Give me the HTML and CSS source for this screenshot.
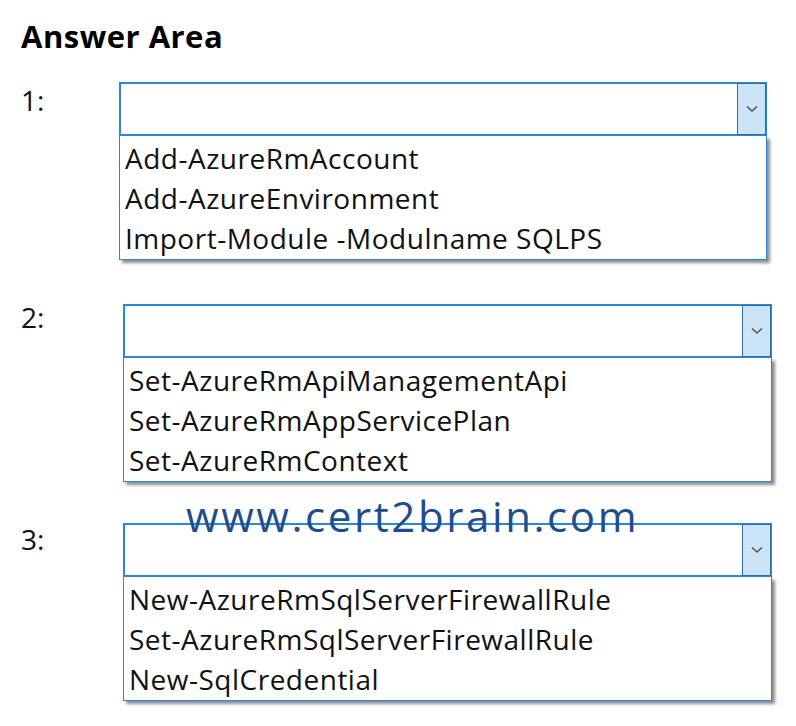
FILE: index.html
```html
<!DOCTYPE html>
<html>
<head>
<meta charset="utf-8">
<link rel="stylesheet" href="styles.css">
</head>
<body>
<div class="page">
  <h1 class="title">Answer Area</h1>

  <div class="group g1">
    <div class="label">1:</div>
    <div class="combo">
      <div class="select">
        <div class="field"></div>
        <div class="btn"><svg width="12" height="8" viewBox="0 0 12 8"><path d="M1 1.5 L6 6 L11 1.5" fill="none" stroke="#555" stroke-width="1.6"/></svg></div>
      </div>
      <div class="list">
        <div class="item">Add-AzureRmAccount</div>
        <div class="item">Add-AzureEnvironment</div>
        <div class="item">Import-Module -Modulname SQLPS</div>
      </div>
    </div>
  </div>

  <div class="group g2">
    <div class="label">2:</div>
    <div class="combo">
      <div class="select">
        <div class="field"></div>
        <div class="btn"><svg width="12" height="8" viewBox="0 0 12 8"><path d="M1 1.5 L6 6 L11 1.5" fill="none" stroke="#555" stroke-width="1.6"/></svg></div>
      </div>
      <div class="list">
        <div class="item">Set-AzureRmApiManagementApi</div>
        <div class="item">Set-AzureRmAppServicePlan</div>
        <div class="item">Set-AzureRmContext</div>
      </div>
    </div>
  </div>

  <div class="group g3">
    <div class="label">3:</div>
    <div class="combo">
      <div class="select">
        <div class="field"></div>
        <div class="btn"><svg width="12" height="8" viewBox="0 0 12 8"><path d="M1 1.5 L6 6 L11 1.5" fill="none" stroke="#555" stroke-width="1.6"/></svg></div>
      </div>
      <div class="list">
        <div class="item">New-AzureRmSqlServerFirewallRule</div>
        <div class="item">Set-AzureRmSqlServerFirewallRule</div>
        <div class="item">New-SqlCredential</div>
      </div>
    </div>
    <div class="watermark">www.cert2brain.com</div>
  </div>
</div>
</body>
</html>
```
FILE: styles.css
```css
html, body {
  margin: 0;
  padding: 0;
  background: #fff;
}
.page {
  position: relative;
  width: 796px;
  height: 726px;
  font-family: "Open Sans", "Noto Sans", sans-serif;
  color: #111;
  padding-top: 16px;
  box-sizing: border-box;
}
.title {
  margin: 0 0 0 21px;
  font-size: 31px;
  font-weight: 700;
  line-height: 40px;
  letter-spacing: 0.5px;
  color: #000;
}
.group {
  position: relative;
  display: flex;
  align-items: flex-start;
}
.g1 { margin-top: 26px; }
.g2 { margin-top: 44px; }
.g3 { margin-top: 41px; }
.label {
  font-size: 28px;
  line-height: 36px;
  padding-left: 21px;
}
.g1 .label { width: 98px; }
.g2 .label { width: 102px; margin-top: -5px; }
.g3 .label { width: 102px; margin-top: -2px; }
.g1 .combo { width: 648px; }
.g2 .combo, .g3 .combo { width: 649px; }
.select {
  display: flex;
  height: 54px;
  box-sizing: border-box;
  border: 2px solid #2a88dc;
  background: #fff;
}
.field { flex: 1; }
.btn {
  width: 27px;
  margin: -1px -1px -1px 0;
  background: #cce4f7;
  border: 1px solid #2e6da4;
  display: flex;
  align-items: center;
  justify-content: center;
}
.list {
  border: 1px solid #2a88dc;
  border-top: none;
  background: #fff;
  box-shadow: 3px 3px 3px rgba(0,0,0,0.45);
  padding: 2px 0 1px 0;
}
.item {
  font-size: 28px;
  line-height: 40px;
  padding-left: 5px;
  white-space: nowrap;
  letter-spacing: 0.5px;
}
.watermark {
  position: absolute;
  left: 186px;
  top: -32px;
  font-size: 42px;
  line-height: 50px;
  color: #1f4e8c;
  letter-spacing: 2.6px;
}
```
